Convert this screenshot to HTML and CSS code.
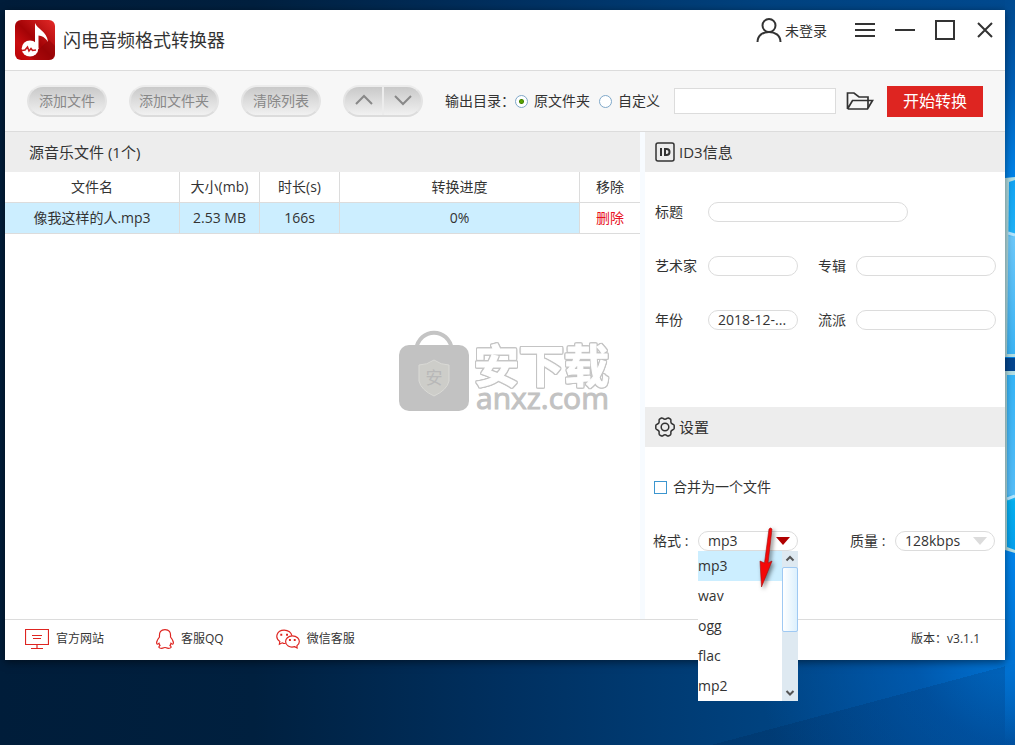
FILE: index.html
```html
<!DOCTYPE html>
<html lang="zh-CN">
<head>
<meta charset="utf-8">
<title>闪电音频格式转换器</title>
<link rel="stylesheet" href="styles.css">
</head>
<body class="desktop">
<svg class="wallpaper" viewBox="0 0 10 745" preserveAspectRatio="none" aria-hidden="true">
  <defs>
    <linearGradient id="pane1" x1="0" y1="0" x2="0" y2="1"><stop offset="0" stop-color="#12a4f4"/><stop offset=".3" stop-color="#1fb2f8"/><stop offset=".33" stop-color="#6cc8fa"/><stop offset="1" stop-color="#3bb4f5"/></linearGradient>
    <linearGradient id="pane2" x1="0" y1="0" x2="0" y2="1"><stop offset="0" stop-color="#35b5f8"/><stop offset=".68" stop-color="#55bdf8"/><stop offset=".72" stop-color="#04b0f0"/><stop offset="1" stop-color="#05a0ee"/></linearGradient>
  </defs>
  <path d="M0 178L10 177V357H0z" fill="#b4dfe4"/>
  <path d="M4 182L10 180V354H2z" fill="url(#pane1)"/>
  <path d="M3 233L10 235" stroke="#b6e6ff" stroke-width="3"/>
  <path d="M0 358H10V371H0z" fill="#04468f"/>
  <path d="M0 371H10V553L0 550z" fill="#b4dfe4"/>
  <path d="M2 375H10V550L2 547z" fill="url(#pane2)"/>
  <path d="M2 499L10 496" stroke="#b6e6ff" stroke-width="3"/>
</svg>
<div class="window">
  <header class="titlebar">
    <svg class="logo" viewBox="0 0 40 40" aria-hidden="true">
      <defs><linearGradient id="lg" x1="0" y1="1" x2="1" y2="0"><stop offset="0" stop-color="#b90306"/><stop offset=".25" stop-color="#c80d10"/><stop offset=".5" stop-color="#a30306"/><stop offset="1" stop-color="#e52a28"/></linearGradient></defs>
      <rect width="40" height="40" rx="6" fill="url(#lg)"/>
      <path d="M23 30L34 20L40 26V34Q40 40 34 40H20L12 36z" fill="#8e0306" opacity=".5"/>
      <ellipse cx="15" cy="28.500" rx="8.300" ry="8" fill="#fff"/>
      <path d="M20 3C22 9 32 11 33 22C30 17 27 16 23.500 15.500V29H20z" fill="#fff"/>
      <path d="M7 30.500L10 30L12.500 27L14 31L16 28.500L17.500 30.500L21 30" fill="none" stroke="#c5181b" stroke-width="1.600"/>
    </svg>
    <h1 class="app-name">闪电音频格式转换器</h1>
    <button class="login" type="button">
      <svg width="26" height="24" viewBox="0 0 26 24" fill="none" stroke="#333" stroke-width="2" aria-hidden="true"><circle cx="13" cy="7.500" r="6.500"/><path d="M1.500 24C1.500 10.500 24.500 10.500 24.500 24"/></svg>
      <span>未登录</span>
    </button>
    <nav class="window-controls">
      <button type="button" aria-label="菜单"><svg viewBox="0 0 20 20"><path d="M0 4H20M0 10H20M0 16H20"/></svg></button>
      <button type="button" aria-label="最小化"><svg viewBox="0 0 20 20"><path d="M0 10H20"/></svg></button>
      <button type="button" aria-label="最大化"><svg viewBox="0 0 20 20"><path d="M1 1H19V19H1z"/></svg></button>
      <button type="button" aria-label="关闭"><svg viewBox="0 0 20 20"><path d="M3 3L17 17M17 3L3 17"/></svg></button>
    </nav>
  </header>

  <section class="toolbar">
    <button class="pill" type="button">添加文件</button>
    <button class="pill" type="button">添加文件夹</button>
    <button class="pill" type="button">清除列表</button>
    <div class="pill-pair">
      <button type="button" aria-label="上移"><svg viewBox="0 0 18 12"><path d="M1 10L9 2L17 10"/></svg></button>
      <button type="button" aria-label="下移"><svg viewBox="0 0 18 12"><path d="M1 2L9 10L17 2"/></svg></button>
    </div>
    <div class="output" role="radiogroup" aria-label="输出目录">
      <span>输出目录：</span>
      <label class="radio"><input type="radio" name="dir" checked>原文件夹</label>
      <label class="radio"><input type="radio" name="dir">自定义</label>
      <input class="path" type="text" aria-label="自定义目录">
      <button class="browse" type="button" aria-label="浏览"><svg width="28" height="20" viewBox="0 0 28 20" fill="none" stroke="#333" stroke-width="1.700"><path d="M1.500 18V2H8L13 6H22V9M1.500 18H21.500L26.500 9.500H6.500L1.500 18"/><path d="M22 9V17"/></svg></button>
    </div>
    <button class="start" type="button">开始转换</button>
  </section>

  <main class="content">
    <section class="files">
      <h2 class="panel-head files-head">源音乐文件 (1个)</h2>
      <table class="list">
        <colgroup><col class="c-name"><col class="c-size"><col class="c-time"><col class="c-progress"><col class="c-remove"></colgroup>
        <thead><tr><th>文件名</th><th>大小(mb)</th><th>时长(s)</th><th>转换进度</th><th>移除</th></tr></thead>
        <tbody><tr><td>像我这样的人.mp3</td><td>2.53 MB</td><td>166s</td><td>0%</td><td class="remove-cell"><button class="remove" type="button">删除</button></td></tr></tbody>
      </table>
    </section>

    <aside class="side">
      <h2 class="panel-head">
        <svg width="20" height="20" viewBox="0 0 20 20" fill="none" stroke="#333" aria-hidden="true"><rect x="1" y="1" width="18" height="18" rx="2" stroke-width="1.500"/><path d="M6 6V14M10 7V13H11.500Q14.500 13 14.500 10T11.500 7H9" stroke-width="2"/></svg>
        ID3信息
      </h2>
      <form class="id3">
        <label for="t">标题</label><input id="t" class="wide" type="text">
        <label for="a">艺术家</label><input id="a" type="text">
        <label class="second" for="b">专辑</label><input id="b" type="text">
        <label for="y">年份</label><input id="y" type="text" value="2018-12-...">
        <label class="second" for="g">流派</label><input id="g" type="text">
      </form>
      <h2 class="panel-head">
        <svg width="20" height="20" viewBox="0 0 20 20" fill="none" stroke="#333" stroke-width="1.500" stroke-linejoin="round" aria-hidden="true"><path d="M6.500 1C8 .5 8 2.200 10 2.200S12 .5 13.500 1L15.500 2.200C16.500 3 15.300 4.500 16.200 6S19 7 19.200 8.500V11.500C19 13 17.100 12.500 16.200 14S16.500 17 15.500 17.800L13.500 19C12 19.500 12 17.800 10 17.800S8 19.500 6.500 19L4.500 17.800C3.500 17 4.700 15.500 3.800 14S1 13 .8 11.500V8.500C1 7 2.900 7.500 3.800 6S3.500 3 4.500 2.200z"/><circle cx="10" cy="10" r="3.800"/></svg>
        设置
      </h2>
      <form class="settings">
        <label class="merge"><input type="checkbox">合并为一个文件</label>
        <div class="options">
          <label for="fmt">格式 :</label>
          <div class="combo">
            <select id="fmt" class="open"><option>mp3</option><option>wav</option><option>ogg</option><option>flac</option><option>mp2</option></select>
            <div class="dropdown">
              <ul role="listbox" aria-label="格式">
                <li role="option" aria-selected="true">mp3</li>
                <li role="option">wav</li>
                <li role="option">ogg</li>
                <li role="option">flac</li>
                <li role="option">mp2</li>
              </ul>
              <div class="scrollbar">
                <svg viewBox="0 0 16 16"><path d="M4.500 9.500L8 6L11.500 9.500"/></svg>
                <div class="thumb"></div>
                <svg viewBox="0 0 16 16"><path d="M4.500 6L8 9.500L11.500 6"/></svg>
              </div>
            </div>
            <svg class="pointer" width="30" height="66" viewBox="0 0 30 66" aria-hidden="true"><path d="M16 4Q17.500 2 19 4L15 38L19 36L8.500 62L7 36L11.500 38z" fill="#f40808" stroke="#a50d0d" stroke-width=".6"/></svg>
          </div>
          <label class="quality-label" for="q">质量 :</label>
          <div class="combo"><select id="q"><option>128kbps</option></select></div>
        </div>
      </form>
    </aside>
  </main>

  <footer class="footer">
    <a href="#site"><svg width="24" height="20" viewBox="0 0 24 20" aria-hidden="true"><path d="M.5 .5H23.500V15.500H.5zM12 16V19M6 19.500H18M7 6.500H17M8 9.500H16"/></svg><span>官方网站</span></a>
    <a href="#qq"><svg width="18" height="20" viewBox="0 0 18 20" aria-hidden="true"><path d="M3.500 8C3 3 5 .7 9 .7S15 3 14.500 8C16.500 10.500 18 14 16.800 15.200C16 15.500 15.500 14.500 15 14.200C14.800 15.500 14.300 16 14 16.500C16 18 15 19.300 12.500 19.300C10.500 19.300 10 18.500 9 18.500S7.500 19.300 5.500 19.300C3 19.300 2 18 4 16.500C3.700 16 3.200 15.500 3 14.200C2.500 14.500 2 15.500 1.200 15.200C0 14 1.500 10.500 3.500 8z"/></svg><span>客服QQ</span></a>
    <a href="#wechat"><svg width="24" height="20" viewBox="0 0 25 20" aria-hidden="true"><path d="M10 14.500C8 15 7.500 14.500 6.500 14L3.500 15.500L4 12.500C-1.500 9 .5 .7 8.500 .7C13 .7 16 3.500 16.500 6.500"/><path d="M17 6.700C22 6.700 24.300 10 24.300 12.500C24.300 15 23 16 21.800 17L22 19.300L19.500 18C14 19.500 10 16.500 10 12.500C10 10 12.500 6.700 17 6.700z"/><path d="M5.500 4.500V6.500M11.500 4.500V6.500M14.500 10V12M19.500 10V12" stroke-width="2"/></svg><span>微信客服</span></a>
    <span class="version">版本：v3.1.1</span>
  </footer>

  <svg class="watermark" width="216" height="84" viewBox="0 0 216 84" aria-hidden="true">
    <path d="M18 20C21 -3 51 -3 54 20" fill="none" stroke="#c4c4c4" stroke-width="4"/>
    <rect x="1" y="15" width="70" height="66" rx="10" fill="#c2c2c2"/>
    <path d="M36 30Q43 35 51 35V51Q49 60 36 66Q23 60 21 51V35Q29 35 36 30z" fill="#cdcdc9" stroke="#dadad6"/>
    <text class="wm-badge" x="36" y="54" text-anchor="middle">安</text>
    <text class="wm-name" x="76" y="53">安下载</text>
    <text class="wm-site" x="78" y="79">anxz.com</text>
  </svg>
</div>
</body>
</html>
```

FILE: styles.css
```css
* { box-sizing: border-box; }

.desktop {
  margin: 0;
  min-height: 100vh;
  padding: 10px 10px 85px 5px;
  display: flex;
  position: relative;
  overflow: hidden;
  color: #333;
  font: 14px/20px "Open Sans", "Noto Sans CJK SC", sans-serif;
  background:
    linear-gradient(165deg, transparent 92%, rgba(0, 10, 40, 0.12) 92%),
    radial-gradient(circle 260px at 100% 86%, #0078dc, rgba(0, 100, 195, 0.6) 40%, transparent),
    linear-gradient(90deg, #001d3a, #00203f 25%, #003060 50%, #00427f 75%, #004a90);
}

.wallpaper {
  position: absolute;
  top: 0;
  right: 0;
  width: 10px;
  height: 745px;
  background: linear-gradient(#004a90, #0060b8 12%, #0084ea 24%, #0084ea 75%, #0074d6 88%, transparent);
}

button, input, select { font: inherit; color: inherit; margin: 0; }
button { border: 0; padding: 0; background: none; }

.window {
  position: relative;
  flex: 1;
  display: flex;
  flex-direction: column;
  background: #fff;
  box-shadow: 0 2px 8px rgba(0, 0, 0, 0.5);
}

.titlebar {
  display: flex;
  height: 61px;
  padding: 0 10px;
  border-bottom: 1px solid #dcdcdc;
}
.logo { width: 40px; height: 40px; margin-top: 10px; }
.app-name { margin: 16px auto 0 8px; font-size: 18px; line-height: 28px; font-weight: 400; }
.login { display: flex; align-items: center; gap: 3px; height: 24px; margin-top: 8px; }
.login span { padding-top: 2px; }
.window-controls { display: flex; gap: 20px; height: 20px; margin: 10px 0 0 28px; }
.window-controls svg { display: block; width: 20px; height: 20px; fill: none; stroke: #333; stroke-width: 2; }

.toolbar {
  display: flex;
  align-items: center;
  gap: 22px;
  height: 61px;
  padding: 0 22px;
  background: #f7f7f7;
  border-bottom: 1px solid #dcdcdc;
}
.pill, .pill-pair {
  flex: none;
  height: 32px;
  border: 2px solid;
  border-color: #ececec #e4e4e4 #dcdcdc;
  border-radius: 16px;
  background: linear-gradient(#c9c9c9, #f1f1f1);
  color: #888;
}
.pill { min-width: 80px; padding: 0 8px; }
.pill-pair { display: flex; width: 80px; }
.pill-pair button { flex: 1; }
.pill-pair button + button { border-left: 2px solid #ececec; }
.pill-pair svg { width: 18px; height: 12px; fill: none; stroke: #888; stroke-width: 2; }
.output { flex: 1; min-width: 0; display: flex; align-items: center; white-space: nowrap; }
.radio { display: flex; align-items: center; gap: 6px; margin-right: 9px; }
.radio input {
  appearance: none;
  width: 13px;
  height: 13px;
  border: 1px solid #7fa8c9;
  border-radius: 50%;
  background: #fff;
}
.radio input:checked { background: radial-gradient(circle, #5aa500 0 1px, #3f8000 2px, #fff 3px); }
.path { flex: 1; min-width: 0; height: 26px; margin: 0 10px 0 5px; border: 1px solid #dcdcdc; background: #fff; }
.browse { display: flex; margin-right: -9px; }
.start { flex: none; height: 31px; padding: 0 16px; background: #de2521; color: #fff; font-size: 16px; }

.content { flex: 1; display: flex; gap: 5px; background: #f7fbff; }
.files { flex: 1; min-width: 0; background: #fff; }
.side { width: 360px; background: #fff; }
.panel-head {
  display: flex;
  align-items: center;
  gap: 4px;
  height: 40px;
  margin: 0;
  padding: 0 10px;
  background: #ededed;
  font-size: 15px;
  font-weight: 400;
}
.files-head { padding-left: 24px; }

.list { width: 100%; table-layout: fixed; border-collapse: separate; border-spacing: 0; text-align: center; }
.c-size, .c-time { width: 80px; }
.c-progress { width: 240px; }
.c-remove { width: 60px; }
.list th, .list td { height: 31px; padding: 0; font-weight: 400; border-bottom: 1px solid #dcdcdc; border-right: 1px solid #dcdcdc; }
.list th:last-child, .list td:last-child { border-right: 0; }
.list td { background: #cef; }
.list .remove-cell { background: #fff; }
.remove { color: #e81123; }

.id3 {
  display: grid;
  grid-template-columns: 53px 90px 58px 1fr;
  row-gap: 34px;
  padding: 30px 9px 77px 10px;
}
.id3 .second { padding-left: 20px; }
.id3 input, .combo select {
  width: 100%;
  height: 20px;
  padding: 0 9px;
  border: 1px solid #dcdcdc;
  border-radius: 10px;
  background: #fff;
  outline: 0;
}
.id3 .wide { grid-column: 2 / 5; width: 200px; }

.settings { padding: 30px 10px 0 8px; }
.merge { display: flex; align-items: center; gap: 6px; }
.merge input { appearance: none; width: 13px; height: 13px; margin-left: 1px; border: 1px solid #3c96cf; }
.options { display: flex; margin-top: 34px; }
.options label { width: 45px; }
.options .quality-label { margin-left: auto; }
.combo { position: relative; width: 100px; height: 20px; }
.combo select { display: block; appearance: none; line-height: 18px; }
.combo::after {
  content: "";
  position: absolute;
  top: 6px;
  right: 8px;
  border: 7px solid transparent;
  border-top: 8px solid #dcdcdc;
  border-bottom: 0;
  pointer-events: none;
}
.combo:has(.open)::after { border-top-color: #b00000; }
.dropdown { position: absolute; z-index: 2; top: 20px; left: 0; width: 100px; display: flex; background: #fff; }
.dropdown ul { flex: 1; margin: 0; padding: 0; list-style: none; }
.dropdown li { height: 30px; line-height: 30px; }
.dropdown li[aria-selected] { background: #cef; }
.scrollbar { display: flex; flex-direction: column; width: 16px; background: #dee9f1; }
.scrollbar svg { width: 16px; height: 16px; fill: none; stroke: #555; stroke-width: 2; }
.scrollbar svg:last-child { margin-top: auto; }
.thumb { height: 65px; border: 1px solid #9fc9f3; border-radius: 2px; background: linear-gradient(90deg, #fff, #dcf0fd); }
.pointer { position: absolute; z-index: 3; top: -6px; left: 55px; filter: drop-shadow(2px 2px 2px rgba(0, 0, 0, 0.5)); }

.footer {
  display: flex;
  align-items: center;
  gap: 52px;
  height: 41px;
  padding: 0 25px 2px 20px;
  border-top: 1px solid #dcdcdc;
  font-size: 12px;
}
.footer a { display: flex; align-items: center; gap: 7px; color: inherit; text-decoration: none; }
.footer svg { fill: none; stroke: #de2521; stroke-width: 1.2; }
.version { margin-left: auto; }

.watermark { position: absolute; top: 320px; left: 50%; margin-left: -107px; pointer-events: none; }
.wm-badge { font-size: 17px; fill: #b8b8b8; }
.wm-name {
  font-size: 45px;
  font-weight: 700;
  fill: #fff;
  stroke: #fff;
  stroke-width: 1;
  stroke-linejoin: round;
  filter: drop-shadow(1px 0 0 #c4c4c4) drop-shadow(-1px 0 0 #c4c4c4) drop-shadow(0 1px 0 #c4c4c4) drop-shadow(0 -1px 0 #c4c4c4);
}
.wm-site { font-size: 30px; fill: #c2c2c2; stroke: #c2c2c2; stroke-width: 1; }
```
